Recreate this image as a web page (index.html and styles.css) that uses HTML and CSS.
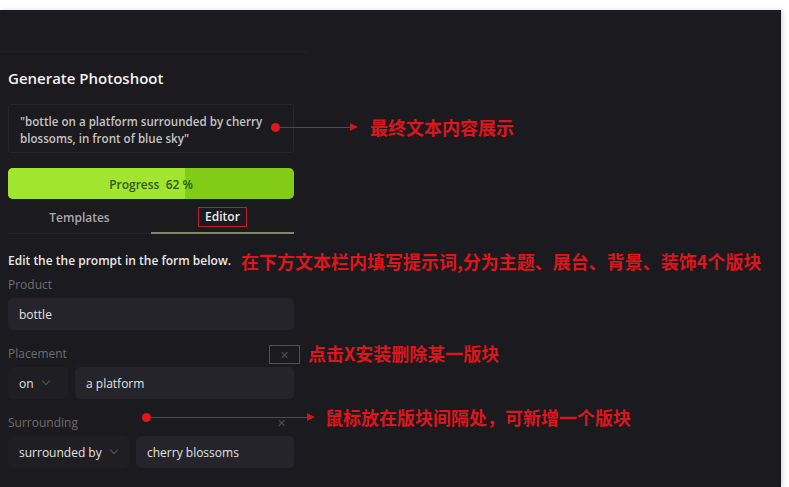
FILE: index.html
```html
<!DOCTYPE html>
<html lang="en">
<head>
    <meta charset="UTF-8">
    <title>Generate Photoshoot</title>
    <link rel="stylesheet" href="styles.css">
</head>
<body>
    <div class="topbar"></div>
    <div class="panel">
        <div class="divider"></div>
        <div class="content">
            <h2>Generate Photoshoot</h2>
            <div class="prompt">"bottle on a platform surrounded by cherry blossoms, in front of blue sky"</div>
            <div class="progress">
                <div class="progress-fill" style="width: 62%;"></div>
                <span>Progress&nbsp; 62 %</span>
            </div>
            <div class="tabs">
                <div class="tab">Templates</div>
                <div class="tab active"><span class="mark">Editor</span></div>
            </div>
            <p class="hint">Edit the the prompt in the form below.</p>

            <div class="field">
                <label>Product</label>
                <div class="row">
                    <div class="input">bottle</div>
                </div>
            </div>
            <div class="field">
                <label>Placement <span class="close boxed">&#x2715;</span></label>
                <div class="row">
                    <div class="select sel-on">on <span class="chev"></span></div>
                    <div class="input">a platform</div>
                </div>
            </div>
            <div class="field">
                <label>Surrounding <span class="close">&#x2715;</span></label>
                <div class="row">
                    <div class="select sel-sur">surrounded by <span class="chev"></span></div>
                    <div class="input">cherry blossoms</div>
                </div>
            </div>
        </div>

        <!-- annotations -->
        <div class="note note1"><i class="dot"></i><i class="line"></i><b>最终文本内容展示</b></div>
        <div class="note note2"><b>在下方文本栏内填写提示词,分为主题、展台、背景、装饰4个版块</b></div>
        <div class="note note3"><b>点击X安装删除某一版块</b></div>
        <div class="note note4"><i class="dot"></i><i class="line"></i><b>鼠标放在版块间隔处，可新增一个版块</b></div>
    </div>
</body>
</html>
```

FILE: styles.css
```css
body {
    margin: 0;
    background: #fff;
    font-family: "Open Sans", "Noto Sans", sans-serif;
    overflow: hidden;
}
.topbar {
    height: 10px;
}
.panel {
    position: relative;
    width: 781px;
    height: 477px;
    background: #1b1a1e;
    box-shadow: 2px 0 4px rgba(0, 0, 0, 0.15);
}
.divider {
    height: 41px;
    width: 307px;
    border-bottom: 1px solid #242328;
}
.content {
    width: 286px;
    padding-left: 8px;
}
h2 {
    margin: 16px 0 0;
    font-size: 15px;
    line-height: 20px;
    font-weight: 600;
    color: #f2f2f2;
}
.prompt {
    margin-top: 16px;
    height: 49px;
    box-sizing: border-box;
    padding: 8px 11px;
    border: 1px solid #26252a;
    border-radius: 3px;
    font-size: 11.6px;
    line-height: 17px;
    font-weight: 600;
    color: #c4c4c4;
}
.progress {
    position: relative;
    margin-top: 15px;
    height: 31px;
    border-radius: 5px;
    background: #82cb17;
    overflow: hidden;
    display: flex;
    align-items: center;
    justify-content: center;
}
.progress-fill {
    position: absolute;
    left: 0;
    top: 0;
    bottom: 0;
    background: #a2e52f;
}
.progress span {
    position: relative;
    top: 1px;
    font-size: 12px;
    font-weight: 600;
    color: #2f5a10;
}
.tabs {
    display: flex;
    height: 34px;
    border-bottom: 1px solid #24242a;
}
.tab {
    flex: 1;
    display: flex;
    align-items: center;
    justify-content: center;
    padding-top: 2px;
    font-size: 12px;
    font-weight: 600;
    color: #a9a9ad;
}
.tab.active {
    color: #ececec;
    border-bottom: 2px solid #7f8b63;
    margin-bottom: -1px;
}
.mark {
    border: 1px solid #c0202a;
    padding: 1px 6px;
    line-height: 16px;
}
.hint {
    margin: 19px 0 0;
    font-size: 12px;
    line-height: 16px;
    font-weight: 600;
    color: #e8e8e8;
}
.field {
    margin-top: 8px;
}
.field + .field {
    margin-top: 16px;
}
label {
    display: flex;
    justify-content: space-between;
    align-items: center;
    height: 16px;
    font-size: 12px;
    line-height: 16px;
    color: #6e6d72;
}
.close {
    font-size: 11px;
    color: #4e4d52;
    padding-right: 8px;
}
.close.boxed {
    border: 1px solid #c0202a;
    padding: 1px 10px;
    margin: -3px -6px -3px 0;
    line-height: 15px;
}
.row {
    display: flex;
    gap: 7px;
    margin-top: 5px;
}
.input,
.select {
    height: 32px;
    box-sizing: border-box;
    display: flex;
    align-items: center;
    border-radius: 5px;
    font-size: 12px;
    color: #e2e2e2;
}
.input {
    flex: 1;
    background: #25242a;
    padding-left: 11px;
}
.select {
    background: #1f1e23;
    padding-left: 11px;
    gap: 9px;
}
.sel-on {
    width: 60px;
}
.sel-sur {
    width: 121px;
}
.chev {
    width: 5px;
    height: 5px;
    border-right: 1px solid #55545a;
    border-bottom: 1px solid #55545a;
    transform: rotate(45deg);
    margin-top: -4px;
}

/* annotations */
.note {
    position: absolute;
    display: flex;
    align-items: center;
    font-family: "Noto Sans CJK SC", sans-serif;
    font-size: 18px;
    color: #dc161c;
    white-space: nowrap;
}
.note b {
    font-weight: 700;
}
.dot {
    width: 9px;
    height: 9px;
    border-radius: 50%;
    background: #e0161c;
}
.line {
    position: relative;
    height: 1px;
    background: #c8161c;
}
.line::after {
    content: "";
    position: absolute;
    right: -1px;
    top: -4px;
    border-left: 8px solid #c8161c;
    border-top: 4.5px solid transparent;
    border-bottom: 4.5px solid transparent;
}
.note1 {
    left: 271px;
    top: 104px;
}
.note1 .line {
    width: 77px;
    margin-right: 13px;
}
.note2 {
    left: 241px;
    top: 238px;
}
.note3 {
    left: 308px;
    top: 330px;
}
.note4 {
    left: 142px;
    top: 394px;
}
.note4 .line {
    width: 163px;
    margin-right: 11px;
}
```
